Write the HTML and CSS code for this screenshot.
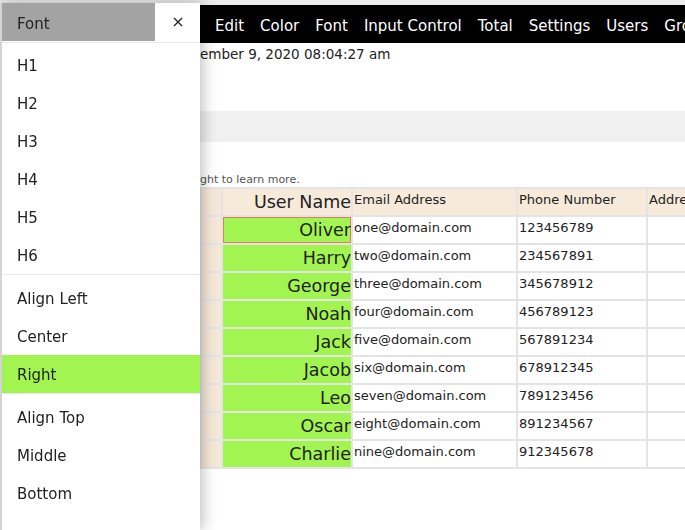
FILE: index.html
```html
<!DOCTYPE html>
<html lang="en">
<head>
<meta charset="utf-8">
<title>Users</title>
<link rel="stylesheet" href="styles.css">
</head>
<body>
<div class="page">
  <div class="topstrip"></div>
  <div class="main">
    <nav class="navbar">
      <span class="nav-item">Edit</span>
      <span class="nav-item">Color</span>
      <span class="nav-item">Font</span>
      <span class="nav-item">Input Control</span>
      <span class="nav-item">Total</span>
      <span class="nav-item">Settings</span>
      <span class="nav-item">Users</span>
      <span class="nav-item">Groups</span>
    </nav>
    <p class="date">ember 9, 2020 08:04:27 am</p>
    <div class="band"></div>
    <p class="note">ght to learn more.</p>
    <div class="grid-wrap">
      <table class="grid">
        <colgroup>
          <col class="c-idx"><col class="c-name"><col class="c-email"><col class="c-phone"><col class="c-addr">
        </colgroup>
        <thead>
          <tr><th class="idx"></th><th class="name">User Name</th><th>Email Address</th><th>Phone Number</th><th>Address</th></tr>
        </thead>
        <tbody>
          <tr><td class="idx"></td><td class="name selected">Oliver</td><td>one@domain.com</td><td>123456789</td><td></td></tr>
          <tr><td class="idx"></td><td class="name">Harry</td><td>two@domain.com</td><td>234567891</td><td></td></tr>
          <tr><td class="idx"></td><td class="name">George</td><td>three@domain.com</td><td>345678912</td><td></td></tr>
          <tr><td class="idx"></td><td class="name">Noah</td><td>four@domain.com</td><td>456789123</td><td></td></tr>
          <tr><td class="idx"></td><td class="name">Jack</td><td>five@domain.com</td><td>567891234</td><td></td></tr>
          <tr><td class="idx"></td><td class="name">Jacob</td><td>six@domain.com</td><td>678912345</td><td></td></tr>
          <tr><td class="idx"></td><td class="name">Leo</td><td>seven@domain.com</td><td>789123456</td><td></td></tr>
          <tr><td class="idx"></td><td class="name">Oscar</td><td>eight@domain.com</td><td>891234567</td><td></td></tr>
          <tr><td class="idx"></td><td class="name">Charlie</td><td>nine@domain.com</td><td>912345678</td><td></td></tr>
        </tbody>
      </table>
    </div>
  </div>
</div>

<aside class="panel">
  <div class="panel-head">
    <div class="panel-title">Font</div>
    <button class="panel-close" type="button" aria-label="Close">
      <svg width="10" height="10" viewBox="0 0 10 10"><path d="M1 1 L9 9 M9 1 L1 9" stroke="#222" stroke-width="1.3" fill="none"/></svg>
    </button>
  </div>
  <ul class="menu-group">
    <li class="menu-item">H1</li>
    <li class="menu-item">H2</li>
    <li class="menu-item">H3</li>
    <li class="menu-item">H4</li>
    <li class="menu-item">H5</li>
    <li class="menu-item">H6</li>
  </ul>
  <ul class="menu-group">
    <li class="menu-item">Align Left</li>
    <li class="menu-item">Center</li>
    <li class="menu-item active">Right</li>
  </ul>
  <ul class="menu-group last">
    <li class="menu-item">Align Top</li>
    <li class="menu-item">Middle</li>
    <li class="menu-item">Bottom</li>
  </ul>
</aside>
</body>
</html>
```

FILE: styles.css
```css
html, body {
  margin: 0;
  padding: 0;
  height: 100%;
  overflow: hidden;
  background: #fff;
}

body {
  font-family: "DejaVu Sans", Verdana, sans-serif;
  color: #222;
}

.topstrip {
  height: 5px;
  background: #ececec;
}

/* content area to the right of the drawer */
.main {
  margin-left: 200px;
  overflow: hidden;
}

.navbar {
  display: flex;
  height: 38px;
  box-sizing: border-box;
  padding: 4px 0 0 7px;
  background: #000;
  color: #fff;
  font-size: 15px;
  line-height: 34px;
  white-space: nowrap;
  overflow: hidden;
}

.nav-item {
  padding: 0 8px;
  flex: none;
}

.date {
  margin: 3px 0 0;
  font-size: 13.5px;
  line-height: 17px;
  white-space: nowrap;
}

.band {
  margin-top: 48px;
  height: 31px;
  background: #f0f0f0;
}

.note {
  margin: 31px 0 0;
  font-size: 11px;
  line-height: 13px;
  color: #555;
  white-space: nowrap;
}

.grid-wrap {
  margin-top: 1px;
  overflow: hidden;
}

.grid {
  table-layout: fixed;
  border-collapse: separate;
  border-spacing: 2px;
  background: #e4e4e4;
  width: 578px;
  font-size: 13px;
}

.c-idx { width: 19px; }
.c-name { width: 128px; }
.c-email { width: 163px; }
.c-phone { width: 128px; }
.c-addr { width: 128px; }

.grid tr {
  height: 26px;
}

.grid th,
.grid td {
  padding: 2px 1px 0;
  line-height: 17px;
  vertical-align: top;
  text-align: left;
  font-weight: normal;
  white-space: nowrap;
  overflow: hidden;
  background: #fff;
}

.grid th {
  background: #f7eadb;
}

.grid .idx {
  background: #f5e8d8;
}

.grid .name {
  padding: 0;
  font-size: 17.5px;
  line-height: 20px;
  text-align: right;
  vertical-align: middle;
}

.grid td.name {
  background: #a2f551;
}

.grid td.selected {
  box-shadow: inset 0 0 0 1px #ef7a5a;
}

/* side drawer overlay */
.panel {
  position: fixed;
  left: 0;
  top: 3px;
  bottom: 0;
  width: 200px;
  box-sizing: border-box;
  background: #fff;
  border-left: 2px solid #d4d4d4;
  box-shadow: 2px 0 14px rgba(0, 0, 0, 0.28);
}

.panel-head {
  display: flex;
  height: 38px;
  padding-bottom: 1px;
  border-bottom: 1px solid #e8e8e8;
}

.panel-title {
  width: 153px;
  background: #a3a3a3;
  padding: 4px 0 0 15px;
  box-sizing: border-box;
  font-size: 15px;
  line-height: 34px;
  color: #222;
}

.panel-close {
  flex: 1;
  border: 0;
  background: transparent;
  padding: 0;
  display: flex;
  align-items: center;
  justify-content: center;
}

.panel-close svg {
  display: block;
}

.menu-group {
  list-style: none;
  margin: 0;
  padding: 4px 0 0;
  border-bottom: 1px solid #e8e8e8;
}

.menu-group:first-of-type {
  padding-top: 3px;
}

.menu-group.last {
  border-bottom: 0;
}

.menu-item {
  height: 38px;
  box-sizing: border-box;
  padding: 2px 0 0 15px;
  line-height: 36px;
  font-size: 15px;
  color: #222;
}

.menu-item.active {
  background: #a2f551;
}
```
